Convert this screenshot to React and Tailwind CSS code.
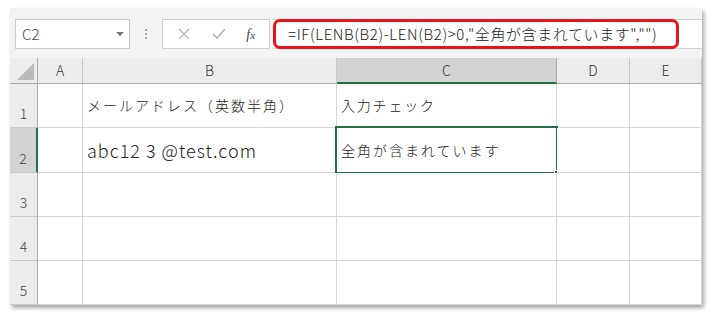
import React from "react";

const font = { fontFamily: '"Noto Sans CJK JP", "Noto Sans", sans-serif' };

const cols = [
  { k: "A", w: 45 },
  { k: "B", w: 254 },
  { k: "C", w: 220 },
  { k: "D", w: 73 },
  { k: "E", w: 72 },
];
const rows = [44, 45, 44, 44, 44];

function Cell({ r, c, children }) {
  const selected = r === 1 && c === 2;
  return (
    <div className="relative border-r border-b border-[#d6d6d6] bg-white flex items-center pl-[4px] text-[#222]">
      {children}
      {selected && (
        <div className="absolute left-[-2px] top-[-2px] right-[-2px] bottom-[-2px] border-2 border-[#217346]">
          <div className="absolute right-[-4px] bottom-[-4px] w-[6px] h-[6px] bg-[#217346] border border-white"></div>
        </div>
      )}
    </div>
  );
}

export default function App() {
  return (
    <div className="w-[714px] h-[319px] bg-white overflow-hidden" style={font}>
      <div className="ml-[10px] mt-[8px] w-[692px] h-[297px] bg-[#f3f3f3] shadow-[2px_3px_4px_rgba(0,0,0,0.35)] flex flex-col">
        {/* formula bar */}
        <div className="h-[50px] flex items-start pt-[11px]">
          <div className="ml-[5px] w-[115px] h-[30px] bg-white border border-[#c9c9c9] flex items-center justify-between pl-[6px] pr-[5px]">
            <span className="text-[15px] text-[#444] font-light">C2</span>
            <span className="w-0 h-0 border-l-[4px] border-r-[4px] border-t-[4px] border-l-transparent border-r-transparent border-t-[#777]"></span>
          </div>
          <div className="w-[32px] h-[30px] flex flex-col items-center justify-center gap-[2px]">
            <span className="w-[2px] h-[2px] bg-[#aaa]"></span>
            <span className="w-[2px] h-[2px] bg-[#aaa]"></span>
            <span className="w-[2px] h-[2px] bg-[#aaa]"></span>
          </div>
          <div className="w-[108px] h-[30px] bg-white border border-[#d0d0d0] flex items-center justify-around px-[4px]">
            <svg width="14" height="14" viewBox="0 0 14 14"><path d="M2 2 L12 12 M12 2 L2 12" stroke="#b5b5b5" strokeWidth="1.3" fill="none" /></svg>
            <svg width="16" height="14" viewBox="0 0 16 14"><path d="M2 7 L6 11 L14 2" stroke="#b5b5b5" strokeWidth="1.6" fill="none" /></svg>
            <span className="text-[14px] italic text-[#444]" style={{ fontFamily: '"Liberation Serif", serif' }}>f<span className="text-[11px]">x</span></span>
          </div>
          <div className="relative ml-[3px] flex-1 h-[30px] bg-white border-t border-b border-[#d0d0d0] flex items-center pl-[15px]">
            <span className="text-[15px] font-light text-[#222] whitespace-nowrap tracking-[0.6px]">=IF(LENB(B2)-LEN(B2)&gt;0,"全角が含まれています","")</span>
            <div className="absolute left-0 top-[-1px] w-[406px] h-[30px] border-[3px] border-[#e5131b] rounded-[7px]"></div>
          </div>
        </div>
        {/* grid */}
        <div
          className="grid"
          style={{
            gridTemplateColumns: `28px ${cols.map((c) => c.w + "px").join(" ")}`,
            gridTemplateRows: `26px ${rows.map((r) => r + "px").join(" ")}`,
          }}
        >
          <div className="relative bg-[#ececec] border-r border-b border-[#ababab]">
            <svg className="absolute right-[3px] bottom-[3px]" width="17" height="17" viewBox="0 0 17 17"><path d="M17 0 L17 17 L0 17 Z" fill="#b9b9b9" /></svg>
          </div>
          {cols.map((c, i) => (
            <div
              key={c.k}
              className={
                i === 2
                  ? "bg-[#d3d3d3] border-r border-[#ababab] border-b-2 border-b-[#217346] flex items-center justify-center text-[14px] font-light text-[#333]"
                  : "bg-[#ececec] border-r border-[#c8c8c8] border-b border-b-[#ababab] flex items-center justify-center text-[14px] font-light text-[#333]"
              }
            >
              {c.k}
            </div>
          ))}
          {rows.map((h, r) => (
            <React.Fragment key={r}>
              <div
                className={
                  r === 1
                    ? "bg-[#d3d3d3] border-r-2 border-r-[#217346] border-b border-b-[#c8c8c8] flex items-end justify-center pb-[3px] text-[14px] font-light text-[#444]"
                    : "bg-[#ececec] border-r border-r-[#ababab] border-b border-b-[#c8c8c8] flex items-end justify-center pb-[3px] text-[14px] font-light text-[#444]"
                }
              >
                {r + 1}
              </div>
              {cols.map((c, ci) => (
                <Cell key={c.k} r={r} c={ci}>
                  {r === 0 && ci === 1 && <span className="text-[14px] font-light tracking-[2px]">メールアドレス（英数半角）</span>}
                  {r === 0 && ci === 2 && <span className="text-[14px] font-light tracking-[1.8px]">入力チェック</span>}
                  {r === 1 && ci === 1 && <span className="text-[18px] font-light tracking-[1px]">abc12 3 @test.com</span>}
                  {r === 1 && ci === 2 && <span className="text-[14px] font-light tracking-[2px]">全角が含まれています</span>}
                </Cell>
              ))}
            </React.Fragment>
          ))}
        </div>
      </div>
    </div>
  );
}
